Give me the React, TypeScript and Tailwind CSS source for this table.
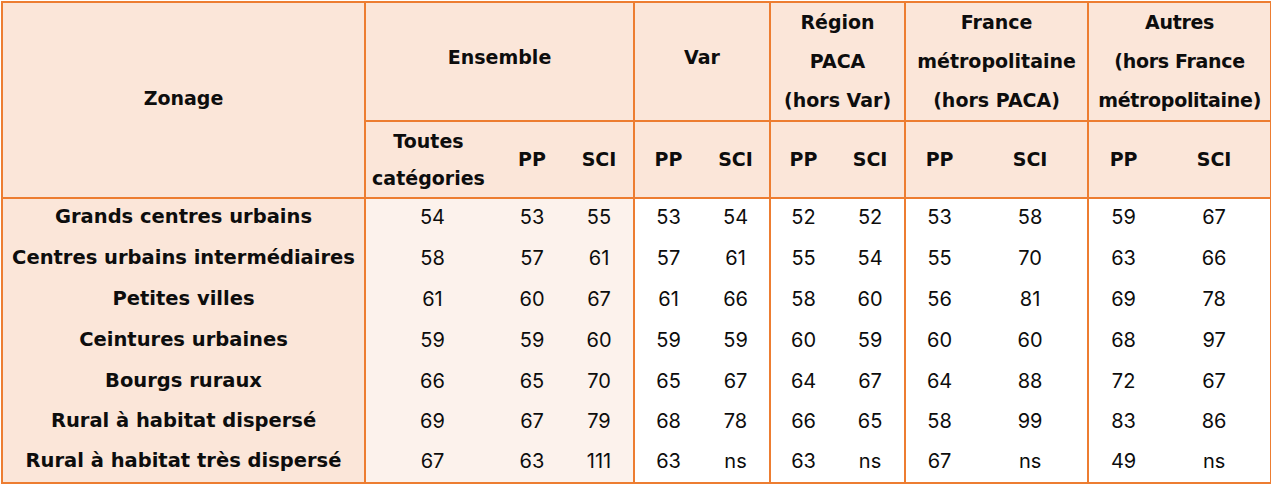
import React from 'react';

const rows: { label: string; values: string[] }[] = [
  { label: 'Grands centres urbains', values: ['54', '53', '55', '53', '54', '52', '52', '53', '58', '59', '67'] },
  { label: 'Centres urbains intermédiaires', values: ['58', '57', '61', '57', '61', '55', '54', '55', '70', '63', '66'] },
  { label: 'Petites villes', values: ['61', '60', '67', '61', '66', '58', '60', '56', '81', '69', '78'] },
  { label: 'Ceintures urbaines', values: ['59', '59', '60', '59', '59', '60', '59', '60', '60', '68', '97'] },
  { label: 'Bourgs ruraux', values: ['66', '65', '70', '65', '67', '64', '67', '64', '88', '72', '67'] },
  { label: 'Rural à habitat dispersé', values: ['69', '67', '79', '68', '78', '66', '65', '58', '99', '83', '86'] },
  { label: 'Rural à habitat très dispersé', values: ['67', '63', '111', '63', 'ns', '63', 'ns', '67', 'ns', '49', 'ns'] },
];

const colWidths = [363, 134, 66, 69, 68, 68, 66, 69, 68, 115, 70, 113];

// columns that close a group get the orange right border
const groupEnd = [2, 4, 6, 8, 10];

const bold = { fontFamily: '"DejaVu Sans", Verdana, sans-serif' };

const App: React.FC = () => {
  return (
    <div className="w-[1271px] h-[485px] bg-white pt-px pl-px" style={{ fontFamily: 'Inter, "Liberation Sans", sans-serif' }}>
      <table className="table-fixed border-collapse border-2 border-[#ed7d31] text-[#0d0d0d] w-[1269px]">
        <colgroup>
          {colWidths.map((w, i) => (
            <col key={i} style={{ width: w }} />
          ))}
        </colgroup>
        <thead className="bg-[#fbe6d9] font-bold text-[19px] leading-[39px]" style={bold}>
          <tr className="h-[117px]">
            <th rowSpan={2} className="border-2 border-[#ed7d31] align-middle pb-1">Zonage</th>
            <th colSpan={3} className="border-2 border-[#ed7d31] pb-2">Ensemble</th>
            <th colSpan={2} className="border-2 border-[#ed7d31] pb-2">Var</th>
            <th colSpan={2} className="border-2 border-[#ed7d31] whitespace-nowrap">Région<br />PACA<br />(hors Var)</th>
            <th colSpan={2} className="border-2 border-[#ed7d31] whitespace-nowrap">France<br />métropolitaine<br />(hors PACA)</th>
            <th colSpan={2} className="border-2 border-[#ed7d31] whitespace-nowrap tracking-[-0.3px]">Autres<br />(hors France<br />métropolitaine)</th>
          </tr>
          <tr className="h-[77px] border-b-2 border-[#ed7d31] leading-[37px]">
            <th className="pr-2">Toutes<br />catégories</th>
            <th>PP</th>
            <th className="border-r-2 border-[#ed7d31]">SCI</th>
            <th>PP</th>
            <th className="border-r-2 border-[#ed7d31]">SCI</th>
            <th>PP</th>
            <th className="border-r-2 border-[#ed7d31]">SCI</th>
            <th>PP</th>
            <th className="border-r-2 border-[#ed7d31]">SCI</th>
            <th>PP</th>
            <th>SCI</th>
          </tr>
        </thead>
        <tbody className="text-[20px]">
          {rows.map((row, r) => (
            <tr key={r} className={r < 5 ? 'h-[41px]' : 'h-[40px]'}>
              <td
                className="bg-[#fbe6d9] border-r-2 border-[#ed7d31] text-center font-bold text-[19.5px] whitespace-nowrap pb-1"
                style={bold}
              >
                {row.label}
              </td>
              {row.values.map((v, i) => (
                <td
                  key={i}
                  className={
                    'text-center pb-1 ' +
                    (i < 3 ? 'bg-[#fcf2ec] ' : '') +
                    (groupEnd.includes(i) ? 'border-r-2 border-[#ed7d31]' : '')
                  }
                >
                  {v}
                </td>
              ))}
            </tr>
          ))}
        </tbody>
      </table>
    </div>
  );
};

export default App;
